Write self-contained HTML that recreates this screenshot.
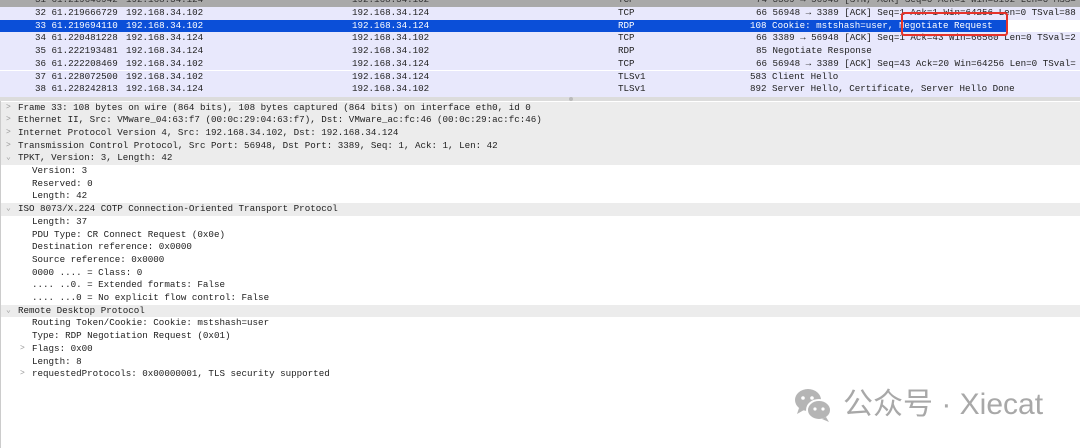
<!DOCTYPE html>
<html><head><meta charset="utf-8"><style>
body{margin:0;width:1080px;height:448px;overflow:hidden;background:#fff;font-family:"Liberation Mono",monospace;font-size:9.2px;color:#222;position:relative}
.r{position:absolute;left:0;height:12.7px;line-height:12.7px;white-space:pre}
.p{background:#e8e8fc;width:1080px}
.c{position:absolute;top:0}
.sel{background:#0b4fd8;color:#fff;width:1008px}
.h{background:#ececec;width:1080px}
.a{position:absolute;color:#999;font-size:8px}
</style></head><body>
<div class="r" style="top:-6px;width:1080px;background:#a9a9a9;color:#333"><span class="c" style="left:35px">31 61.219646942</span><span class="c" style="left:126px">192.168.34.124</span><span class="c" style="left:352px">192.168.34.102</span><span class="c" style="left:618px">TCP</span><span class="c" style="left:756px">74 3389 → 56948 [SYN, ACK] Seq=0 Ack=1 Win=8192 Len=0 MSS=</span></div>
<div class="r p" style="top:7px"><span class="c" style="left:35px">32 61.219666729</span><span class="c" style="left:126px">192.168.34.102</span><span class="c" style="left:352px">192.168.34.124</span><span class="c" style="left:618px">TCP</span><span class="c" style="left:756px">66 56948 → 3389 [ACK] Seq=1 Ack=1 Win=64256 Len=0 TSval=88</span></div>
<div class="r sel" style="top:19.7px"><span class="c" style="left:35px">33 61.219694110</span><span class="c" style="left:126px">192.168.34.102</span><span class="c" style="left:352px">192.168.34.124</span><span class="c" style="left:618px">RDP</span><span class="c" style="left:750px">108 Cookie: mstshash=user, Negotiate Request</span></div>
<div class="r p" style="top:32.4px"><span class="c" style="left:35px">34 61.220481228</span><span class="c" style="left:126px">192.168.34.124</span><span class="c" style="left:352px">192.168.34.102</span><span class="c" style="left:618px">TCP</span><span class="c" style="left:756px">66 3389 → 56948 [ACK] Seq=1 Ack=43 Win=66560 Len=0 TSval=2</span></div>
<div class="r p" style="top:45.1px"><span class="c" style="left:35px">35 61.222193481</span><span class="c" style="left:126px">192.168.34.124</span><span class="c" style="left:352px">192.168.34.102</span><span class="c" style="left:618px">RDP</span><span class="c" style="left:756px">85 Negotiate Response</span></div>
<div class="r p" style="top:57.8px"><span class="c" style="left:35px">36 61.222208469</span><span class="c" style="left:126px">192.168.34.102</span><span class="c" style="left:352px">192.168.34.124</span><span class="c" style="left:618px">TCP</span><span class="c" style="left:756px">66 56948 → 3389 [ACK] Seq=43 Ack=20 Win=64256 Len=0 TSval=</span></div>
<div class="r p" style="top:70.5px"><span class="c" style="left:35px">37 61.228072500</span><span class="c" style="left:126px">192.168.34.102</span><span class="c" style="left:352px">192.168.34.124</span><span class="c" style="left:618px">TLSv1</span><span class="c" style="left:750px">583 Client Hello</span></div>
<div class="r p" style="top:83.2px;height:13.8px"><span class="c" style="left:35px">38 61.228242813</span><span class="c" style="left:126px">192.168.34.124</span><span class="c" style="left:352px">192.168.34.102</span><span class="c" style="left:618px">TLSv1</span><span class="c" style="left:750px">892 Server Hello, Certificate, Server Hello Done</span></div>
<div style="position:absolute;left:0;top:97px;width:1080px;height:4px;background:#dcdcdc"></div>
<div style="position:absolute;left:569px;top:97px;width:4px;height:4px;border-radius:2px;background:#bbb"></div>
<div style="position:absolute;left:901px;top:12px;width:103px;height:20px;border:2px solid #e5332a;border-radius:3px"></div>

<div class="r h" style="top:101.5px"><span class="a" style="left:6px">&gt;</span><span class="c" style="left:18px">Frame 33: 108 bytes on wire (864 bits), 108 bytes captured (864 bits) on interface eth0, id 0</span></div>
<div class="r h" style="top:114.2px"><span class="a" style="left:6px">&gt;</span><span class="c" style="left:18px">Ethernet II, Src: VMware_04:63:f7 (00:0c:29:04:63:f7), Dst: VMware_ac:fc:46 (00:0c:29:ac:fc:46)</span></div>
<div class="r h" style="top:126.9px"><span class="a" style="left:6px">&gt;</span><span class="c" style="left:18px">Internet Protocol Version 4, Src: 192.168.34.102, Dst: 192.168.34.124</span></div>
<div class="r h" style="top:139.6px"><span class="a" style="left:6px">&gt;</span><span class="c" style="left:18px">Transmission Control Protocol, Src Port: 56948, Dst Port: 3389, Seq: 1, Ack: 1, Len: 42</span></div>
<div class="r h" style="top:152.3px"><span class="a" style="left:6px">⌄</span><span class="c" style="left:18px">TPKT, Version: 3, Length: 42</span></div>
<div class="r" style="top:165px"><span class="c" style="left:32px">Version: 3</span></div>
<div class="r" style="top:177.7px"><span class="c" style="left:32px">Reserved: 0</span></div>
<div class="r" style="top:190.4px"><span class="c" style="left:32px">Length: 42</span></div>
<div class="r h" style="top:203.1px"><span class="a" style="left:6px">⌄</span><span class="c" style="left:18px">ISO 8073/X.224 COTP Connection-Oriented Transport Protocol</span></div>
<div class="r" style="top:215.8px"><span class="c" style="left:32px">Length: 37</span></div>
<div class="r" style="top:228.5px"><span class="c" style="left:32px">PDU Type: CR Connect Request (0x0e)</span></div>
<div class="r" style="top:241.2px"><span class="c" style="left:32px">Destination reference: 0x0000</span></div>
<div class="r" style="top:253.9px"><span class="c" style="left:32px">Source reference: 0x0000</span></div>
<div class="r" style="top:266.6px"><span class="c" style="left:32px">0000 .... = Class: 0</span></div>
<div class="r" style="top:279.3px"><span class="c" style="left:32px">.... ..0. = Extended formats: False</span></div>
<div class="r" style="top:292px"><span class="c" style="left:32px">.... ...0 = No explicit flow control: False</span></div>
<div class="r h" style="top:304.7px"><span class="a" style="left:6px">⌄</span><span class="c" style="left:18px">Remote Desktop Protocol</span></div>
<div class="r" style="top:317.4px"><span class="c" style="left:32px">Routing Token/Cookie: Cookie: mstshash=user</span></div>
<div class="r" style="top:330.1px"><span class="c" style="left:32px">Type: RDP Negotiation Request (0x01)</span></div>
<div class="r" style="top:342.8px"><span class="a" style="left:20px">&gt;</span><span class="c" style="left:32px">Flags: 0x00</span></div>
<div class="r" style="top:355.5px"><span class="c" style="left:32px">Length: 8</span></div>
<div class="r" style="top:368.2px"><span class="a" style="left:20px">&gt;</span><span class="c" style="left:32px">requestedProtocols: 0x00000001, TLS security supported</span></div>
<div style="position:absolute;left:0;top:101px;width:1px;height:347px;background:#ccc"></div>

<svg style="position:absolute;left:793px;top:387px" width="42" height="38" viewBox="0 0 42 38">
<ellipse cx="15" cy="13" rx="13" ry="11" fill="#b5b5b5"/>
<path d="M6 21 L4 27 L11 23Z" fill="#b5b5b5"/>
<ellipse cx="26" cy="23" rx="12" ry="10" fill="#b5b5b5" stroke="#fff" stroke-width="2"/>
<path d="M33 30 L36 35 L29 32Z" fill="#b5b5b5"/>
<circle cx="10" cy="11" r="1.8" fill="#fff"/><circle cx="19" cy="11" r="1.8" fill="#fff"/>
<circle cx="22" cy="22" r="1.6" fill="#fff"/><circle cx="30" cy="22" r="1.6" fill="#fff"/>
</svg>
<div style="position:absolute;left:843px;top:388px;font-family:'Liberation Sans','Noto Sans CJK SC',sans-serif;font-size:30px;color:#a8a8a8;white-space:nowrap;line-height:34px">公众号 · Xiecat</div>
</body></html>
